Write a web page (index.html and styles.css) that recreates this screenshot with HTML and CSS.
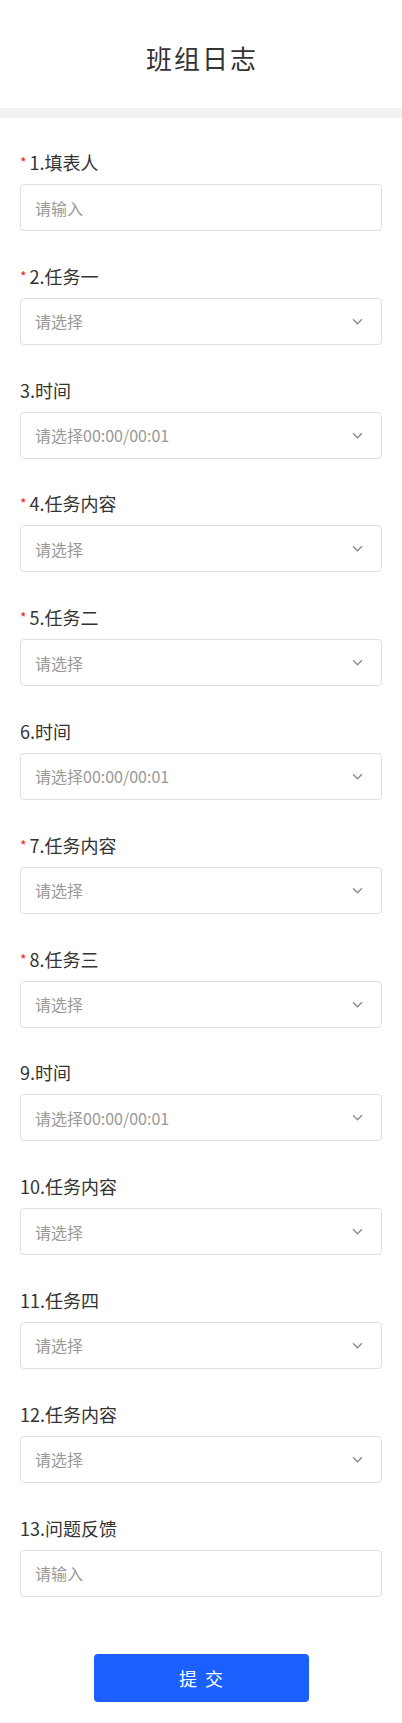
FILE: index.html
```html
<!DOCTYPE html>
<html lang="zh-CN">
<head>
  <meta charset="UTF-8">
  <meta name="viewport" content="width=device-width, initial-scale=1.0">
  <title>班组日志</title>
  <link rel="stylesheet" href="styles.css">
</head>
<body>
  <header class="page-header">
    <h1>班组日志</h1>
  </header>
  <div class="divider"></div>

  <form class="form">
    <div class="field">
      <label class="field-label"><span class="req">*</span>1.填表人</label>
      <div class="control"><span class="placeholder">请输入</span></div>
    </div>

    <div class="field">
      <label class="field-label"><span class="req">*</span>2.任务一</label>
      <div class="control select"><span class="placeholder">请选择</span><svg class="arrow" viewBox="0 0 10 6"><path d="M1 1l4 4 4-4"/></svg></div>
    </div>

    <div class="field">
      <label class="field-label">3.时间</label>
      <div class="control select"><span class="placeholder">请选择00:00/00:01</span><svg class="arrow" viewBox="0 0 10 6"><path d="M1 1l4 4 4-4"/></svg></div>
    </div>

    <div class="field">
      <label class="field-label"><span class="req">*</span>4.任务内容</label>
      <div class="control select"><span class="placeholder">请选择</span><svg class="arrow" viewBox="0 0 10 6"><path d="M1 1l4 4 4-4"/></svg></div>
    </div>

    <div class="field">
      <label class="field-label"><span class="req">*</span>5.任务二</label>
      <div class="control select"><span class="placeholder">请选择</span><svg class="arrow" viewBox="0 0 10 6"><path d="M1 1l4 4 4-4"/></svg></div>
    </div>

    <div class="field">
      <label class="field-label">6.时间</label>
      <div class="control select"><span class="placeholder">请选择00:00/00:01</span><svg class="arrow" viewBox="0 0 10 6"><path d="M1 1l4 4 4-4"/></svg></div>
    </div>

    <div class="field">
      <label class="field-label"><span class="req">*</span>7.任务内容</label>
      <div class="control select"><span class="placeholder">请选择</span><svg class="arrow" viewBox="0 0 10 6"><path d="M1 1l4 4 4-4"/></svg></div>
    </div>

    <div class="field">
      <label class="field-label"><span class="req">*</span>8.任务三</label>
      <div class="control select"><span class="placeholder">请选择</span><svg class="arrow" viewBox="0 0 10 6"><path d="M1 1l4 4 4-4"/></svg></div>
    </div>

    <div class="field">
      <label class="field-label">9.时间</label>
      <div class="control select"><span class="placeholder">请选择00:00/00:01</span><svg class="arrow" viewBox="0 0 10 6"><path d="M1 1l4 4 4-4"/></svg></div>
    </div>

    <div class="field">
      <label class="field-label">10.任务内容</label>
      <div class="control select"><span class="placeholder">请选择</span><svg class="arrow" viewBox="0 0 10 6"><path d="M1 1l4 4 4-4"/></svg></div>
    </div>

    <div class="field">
      <label class="field-label">11.任务四</label>
      <div class="control select"><span class="placeholder">请选择</span><svg class="arrow" viewBox="0 0 10 6"><path d="M1 1l4 4 4-4"/></svg></div>
    </div>

    <div class="field">
      <label class="field-label">12.任务内容</label>
      <div class="control select"><span class="placeholder">请选择</span><svg class="arrow" viewBox="0 0 10 6"><path d="M1 1l4 4 4-4"/></svg></div>
    </div>

    <div class="field">
      <label class="field-label">13.问题反馈</label>
      <div class="control"><span class="placeholder">请输入</span></div>
    </div>

    <div class="actions">
      <button type="button" class="submit">提 交</button>
    </div>
  </form>
</body>
</html>
```

FILE: styles.css
```css
/* podstawowy reset */
* {
  margin: 0;
  padding: 0;
  box-sizing: border-box;
}

body {
  font-family: "Noto Sans CJK SC", "Noto Sans", sans-serif;
  background-color: #fff;
  color: #333;
}

.page-header {
  height: 108px;
  padding-top: 41px;
  text-align: center;
}

.page-header h1 {
  font-size: 26px;
  font-weight: normal;
  line-height: 34px;
  letter-spacing: 2px;
  padding-left: 2px;
  color: #333;
}

.divider {
  height: 10px;
  background-color: #f2f2f2;
}

.form {
  padding: 32px 20px 20px;
}

.field {
  margin-bottom: 32.8px;
}

.field-label {
  display: block;
  font-size: 18px;
  line-height: 24px;
  margin-bottom: 10px;
  color: #333;
}

.req {
  color: #f5222d;
  font-size: 14px;
  margin-right: 3px;
  vertical-align: 2px;
}

.control {
  display: flex;
  align-items: center;
  justify-content: space-between;
  height: 47px;
  padding: 0 18px 0 14px;
  border: 1px solid #e0e0e0;
  border-radius: 4px;
}

.placeholder {
  font-size: 16px;
  color: #999;
}

.arrow {
  width: 11px;
  height: 7px;
  fill: none;
  stroke: #8c8c8c;
  stroke-width: 1.3;
}

.actions {
  display: flex;
  justify-content: center;
  padding-top: 25px;
}

.submit {
  width: 215px;
  height: 48px;
  border: none;
  border-radius: 4px;
  background-color: #1b5fff;
  color: #fff;
  font-family: "Noto Sans CJK SC", sans-serif;
  font-size: 18px;
  letter-spacing: 2px;
  padding-left: 2px;
  cursor: pointer;
}
```
